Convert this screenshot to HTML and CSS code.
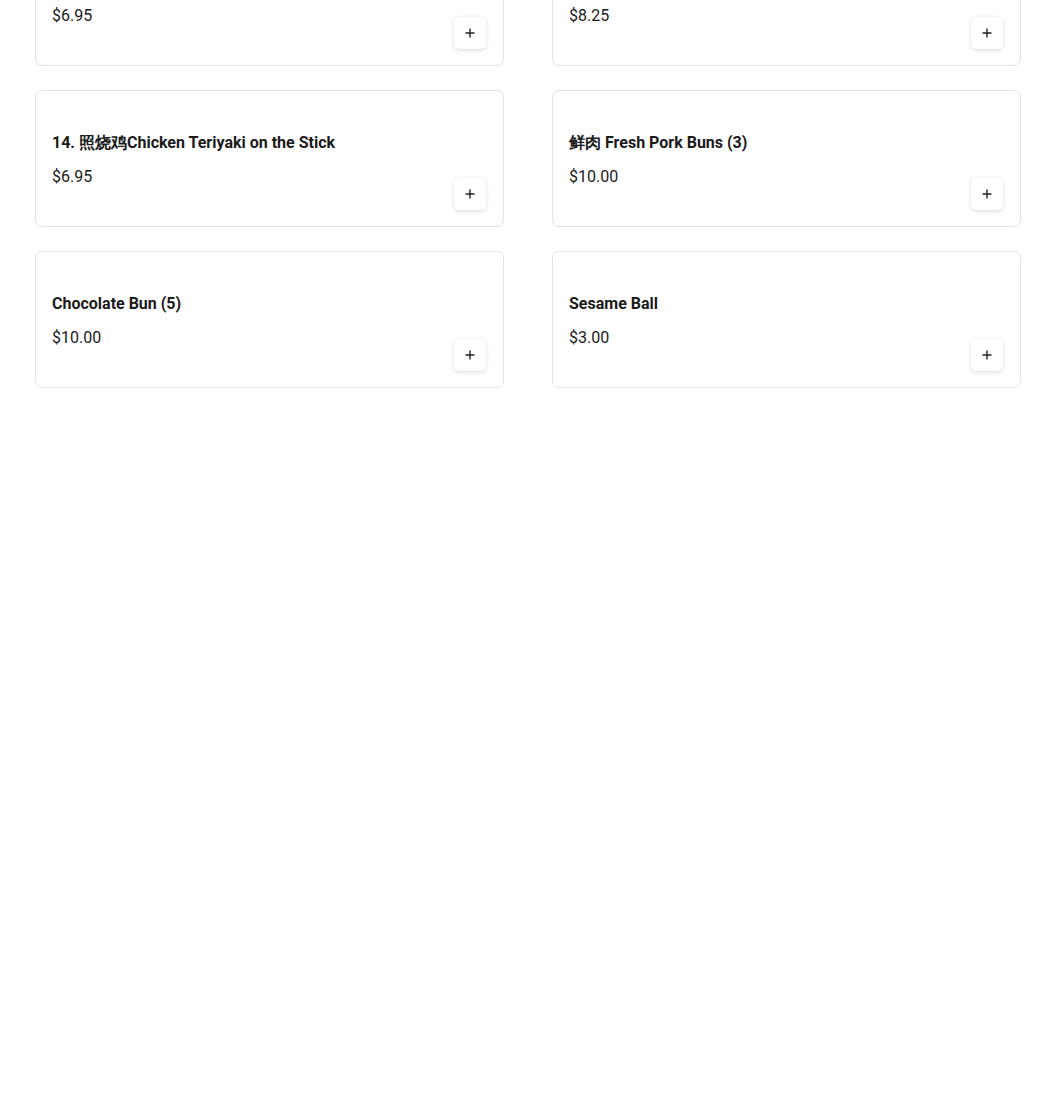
FILE: index.html
```html
<!DOCTYPE html>
<html lang="en">
<head>
    <meta charset="UTF-8">
    <meta name="viewport" content="width=device-width, initial-scale=1.0">
    <title>Menu</title>
    <link rel="stylesheet" href="styles.css">
</head>
<body>
    <div class="menu-list">
        <div class="item-card">
            <div class="item-info">
                <strong class="item-name">13. Chicken Teriyaki</strong>
                <span class="item-price">$6.95</span>
            </div>
            <button class="add-btn" type="button" aria-label="add">
                <svg width="10" height="10" viewBox="0 0 10 10"><path d="M5 0.5v9M0.5 5h9" stroke="#222" stroke-width="1.4"/></svg>
            </button>
        </div><!--item-card-->
        <div class="item-card">
            <div class="item-info">
                <strong class="item-name">Beef Chow Fun</strong>
                <span class="item-price">$8.25</span>
            </div>
            <button class="add-btn" type="button" aria-label="add">
                <svg width="10" height="10" viewBox="0 0 10 10"><path d="M5 0.5v9M0.5 5h9" stroke="#222" stroke-width="1.4"/></svg>
            </button>
        </div>
        <div class="item-card">
            <div class="item-info">
                <strong class="item-name">14. 照烧鸡Chicken Teriyaki on the Stick</strong>
                <span class="item-price">$6.95</span>
            </div>
            <button class="add-btn" type="button" aria-label="add">
                <svg width="10" height="10" viewBox="0 0 10 10"><path d="M5 0.5v9M0.5 5h9" stroke="#222" stroke-width="1.4"/></svg>
            </button>
        </div>
        <div class="item-card">
            <div class="item-info">
                <strong class="item-name">鲜肉 Fresh Pork Buns (3)</strong>
                <span class="item-price">$10.00</span>
            </div>
            <button class="add-btn" type="button" aria-label="add">
                <svg width="10" height="10" viewBox="0 0 10 10"><path d="M5 0.5v9M0.5 5h9" stroke="#222" stroke-width="1.4"/></svg>
            </button>
        </div>
        <div class="item-card">
            <div class="item-info">
                <strong class="item-name">Chocolate Bun (5)</strong>
                <span class="item-price">$10.00</span>
            </div>
            <button class="add-btn" type="button" aria-label="add">
                <svg width="10" height="10" viewBox="0 0 10 10"><path d="M5 0.5v9M0.5 5h9" stroke="#222" stroke-width="1.4"/></svg>
            </button>
        </div>
        <div class="item-card">
            <div class="item-info">
                <strong class="item-name">Sesame Ball</strong>
                <span class="item-price">$3.00</span>
            </div>
            <button class="add-btn" type="button" aria-label="add">
                <svg width="10" height="10" viewBox="0 0 10 10"><path d="M5 0.5v9M0.5 5h9" stroke="#222" stroke-width="1.4"/></svg>
            </button>
        </div>
    </div><!--menu-list-->
</body>
</html>
```

FILE: styles.css
```css
*{
    margin : 0;
    padding : 0;
    box-sizing : border-box;
}
body{
    background-color : #fff;
    font-family : Roboto, 'Noto Sans', sans-serif;
    color : #1a1a1a;
}
.menu-list{
    display : grid;
    grid-template-columns : 469px 469px;
    column-gap : 48px;
    row-gap : 24px;
    margin-top : -71px;
    margin-left : 35px;
}
.item-card{
    display : flex;
    justify-content : space-between;
    align-items : flex-end;
    height : 137px;
    padding : 16px 17px 16px 16px;
    border : 1px solid #e3e3e3;
    border-radius : 7px;
    background-color : #fff;
}
.item-info{
    align-self : flex-start;
    display : flex;
    flex-direction : column;
    padding-top : 24px;
}
.item-name{
    font-size : 16px;
    line-height : 24px;
    font-weight : 700;
}
.item-price{
    margin-top : 10px;
    font-size : 16px;
    line-height : 24px;
}
.add-btn{
    display : flex;
    align-items : center;
    justify-content : center;
    width : 32px;
    height : 32px;
    border : 0;
    border-radius : 5px;
    background-color : #fff;
    box-shadow : 0 1px 4px rgba(0,0,0,0.16);
    cursor : pointer;
}
```
